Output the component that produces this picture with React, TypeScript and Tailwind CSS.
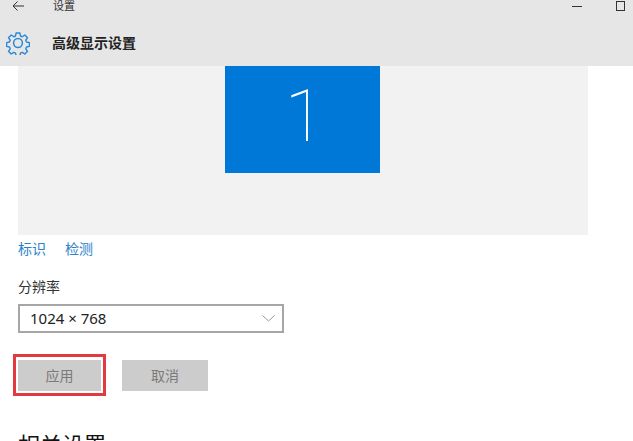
import React from 'react';

const cjk = { fontFamily: '"Noto Sans", "Noto Sans CJK SC", sans-serif' };

const GearIcon = () => (
  <svg width="24" height="24" viewBox="0 0 24 24" fill="none" stroke="#2b88d8" strokeWidth="1.5" strokeLinejoin="round">
    <path d="M10 1.5h4l.6 3.1 1.9.8 2.7-1.8 2.8 2.8-1.8 2.7.8 1.9 3 .6v4l-3 .6-.8 1.9 1.8 2.7-2.8 2.8-2.7-1.8-1.9.8-.6 3h-4l-.6-3-1.9-.8-2.7 1.8-2.8-2.8 1.8-2.7-.8-1.9-3-.6v-4l3-.6.8-1.9-1.8-2.7 2.8-2.8 2.7 1.8 1.9-.8z" transform="translate(.6 .6) scale(0.95)" />
    <circle cx="12" cy="12" r="4.4" />
  </svg>
);

export default function App() {
  return (
    <div className="h-[441px] w-[633px] overflow-hidden bg-white" style={cjk}>
      {/* Title bar */}
      <div className="h-[66px] bg-[#e6e6e6]">
        <div className="flex h-[11px] items-center text-[#333]">
          <svg width="14" height="12" viewBox="0 0 14 12" fill="none" stroke="#333" strokeWidth="1" className="ml-[11px]">
            <path d="M13 6H2M6.500 1.500 2 6l4.500 4.500" />
          </svg>
          <span className="ml-[28px] text-[11px] leading-none">设置</span>
          <div className="ml-auto flex items-center">
            <div className="mt-[2px] h-px w-[10px] bg-[#333]" />
            <div className="ml-[34px] mr-[8px] h-[10px] w-[9px] border border-[#333]" />
          </div>
        </div>
        <div className="flex items-center pl-[6px] pt-[19px]">
          <GearIcon />
          <span className="ml-[22px] text-[14px] font-bold leading-[26px] text-[#222]">高级显示设置</span>
        </div>
      </div>

      {/* Content */}
      <div className="pl-[18px]">
        <div className="flex h-[169px] w-[570px] justify-center bg-[#f2f2f2] pr-px">
          <div className="flex h-[107px] w-[155px] items-center justify-center bg-[#0078d7] pb-[6px] pl-[4px]">
            <span className="font-['Roboto'] text-[72px] font-thin leading-none text-white">1</span>
          </div>
        </div>

        <div className="mt-[5px] flex gap-[19px] text-[14px] leading-[18px] text-[#2a83c8]">
          <span>标识</span>
          <span>检测</span>
        </div>

        <div className="mt-[20px] text-[14px] leading-[18px] text-[#333]">分辨率</div>

        <div className="mt-[8px] flex h-[29px] w-[266px] items-center justify-between border-2 border-[#a6a6a6] pl-[10px] pr-[7px]">
          <span className="text-[15px] text-[#222]">1024 × 768</span>
          <svg width="13" height="7" viewBox="0 0 13 7" fill="none" stroke="#999" strokeWidth="1">
            <path d="M.5.5 6.500 6l6-5.500" />
          </svg>
        </div>

        <div className="mt-[27px] flex gap-[21px]">
          <div className="relative flex h-[31px] w-[83px] items-center justify-center bg-[#cccccc] text-[14px] text-[#7a7a7a]">
            应用
            <div className="absolute -bottom-[5px] -left-[5px] -right-[5px] -top-[6px] border-[3px] border-[#e23a3e]" />
          </div>
          <div className="flex h-[31px] w-[86px] items-center justify-center bg-[#cccccc] text-[14px] text-[#7a7a7a]">取消</div>
        </div>

        <div className="mt-[38px] text-[22px] leading-[30px] text-[#111]">相关设置</div>
      </div>
    </div>
  );
}
